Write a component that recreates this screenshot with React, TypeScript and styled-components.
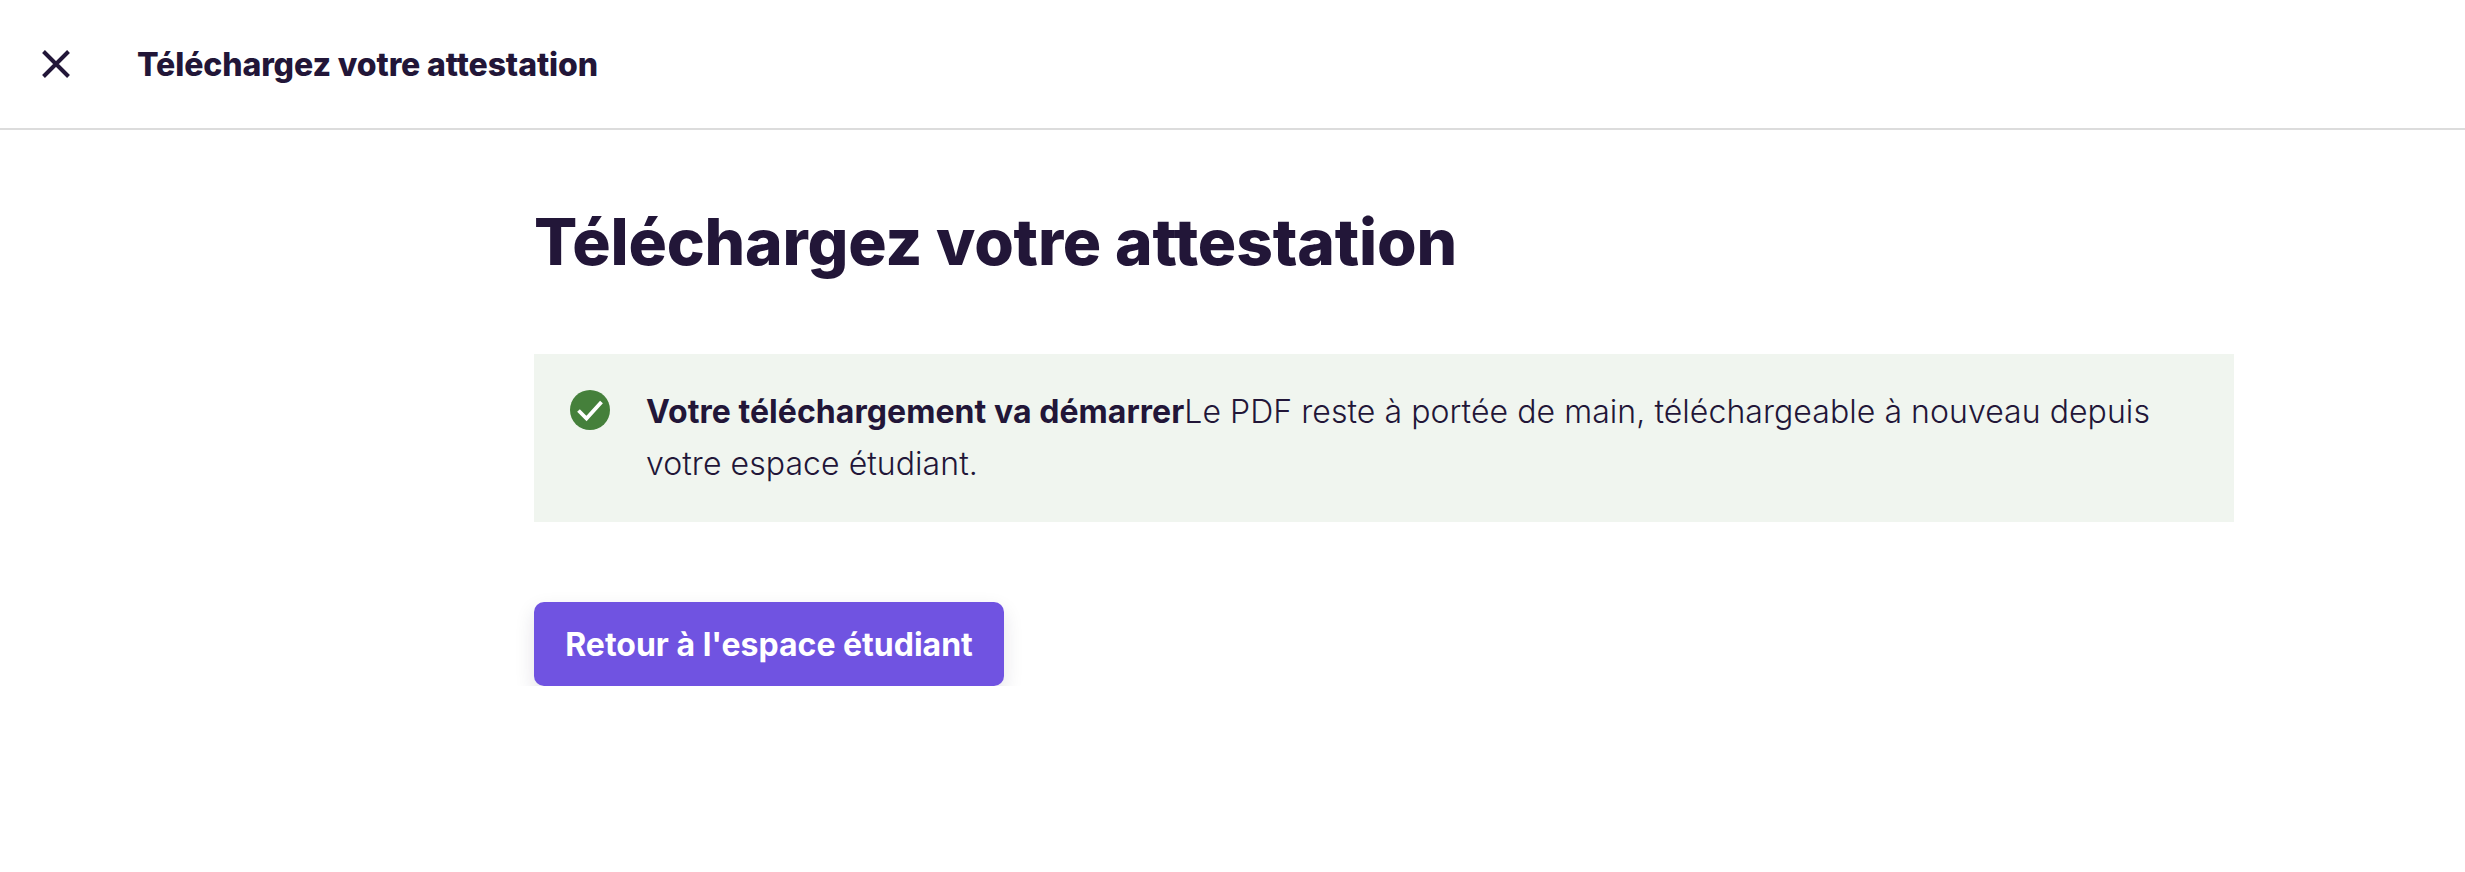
import styled, { createGlobalStyle } from 'styled-components';

const GlobalStyle = createGlobalStyle`
	html, body {
		margin: 0;
		padding: 0;
		background: #fff;
		color: #221638;
		font-family: Inter, "Liberation Sans", sans-serif;
		font-feature-settings: "calt" 0, "liga" 0;
	}
	* {
		box-sizing: border-box;
	}
`;

const TopBar = styled.header`
	display: flex;
	align-items: center;
	height: 130px;
	padding-left: 42px;
	border-bottom: 2px solid #dcdcdc;
`;

const CloseButton = styled.button`
	display: flex;
	padding: 0;
	border: 0;
	background: none;
	color: #221638;
	margin-right: 67px;
`;

const TopTitle = styled.span`
	font-size: 32px;
	font-weight: 800;
	letter-spacing: -0.1px;
`;

const Main = styled.main`
	width: 1700px;
	margin-left: 534px;
`;

const Heading = styled.h1`
	margin: 72px 0;
	font-size: 64px;
	line-height: 80px;
	font-weight: 800;
	letter-spacing: -0.16px;
`;

const Notice = styled.div`
	display: flex;
	gap: 36px;
	padding: 32px 36px;
	background: #f0f5ef;
`;

const NoticeIcon = styled.svg`
	flex: none;
	width: 40px;
	height: 40px;
	margin-top: 4px;
`;

const NoticeText = styled.p`
	margin: 0;
	font-size: 32px;
	line-height: 52px;
	font-weight: 300;
	letter-spacing: 0.06px;
`;

const NoticeLead = styled.strong`
	font-weight: 700;
`;

const PrimaryButton = styled.button`
	display: block;
	margin-top: 80px;
	width: 470px;
	height: 84px;
	padding: 0;
	border: 0;
	border-radius: 10px;
	background: #7053e1;
	color: #fff;
	font-family: inherit;
	font-feature-settings: inherit;
	font-size: 32px;
	font-weight: 700;
	box-shadow: 0 8px 20px rgba(34, 22, 56, 0.12);
`;

const App = () => (
	<>
		<GlobalStyle />
		<TopBar>
			<CloseButton aria-label="Fermer">
				<svg width="28" height="28" viewBox="0 0 28 28" fill="none" stroke="currentColor" strokeWidth="4">
					<path d="M1.5 1.5l25 25M26.5 1.5l-25 25" />
				</svg>
			</CloseButton>
			<TopTitle>Téléchargez votre attestation</TopTitle>
		</TopBar>
		<Main>
			<Heading>Téléchargez votre attestation</Heading>
			<Notice>
				<NoticeIcon viewBox="0 0 40 40">
					<circle cx="20" cy="20" r="20" fill="#45803b" />
					<path d="M8.5 20.5l8 8L31.5 12" fill="none" stroke="#fff" strokeWidth="3.8" />
				</NoticeIcon>
				<NoticeText>
					<NoticeLead>Votre téléchargement va démarrer</NoticeLead>Le PDF reste à portée de main, téléchargeable à nouveau depuis votre espace étudiant.
				</NoticeText>
			</Notice>
			<PrimaryButton>Retour à l'espace étudiant</PrimaryButton>
		</Main>
	</>
);

export default App;
